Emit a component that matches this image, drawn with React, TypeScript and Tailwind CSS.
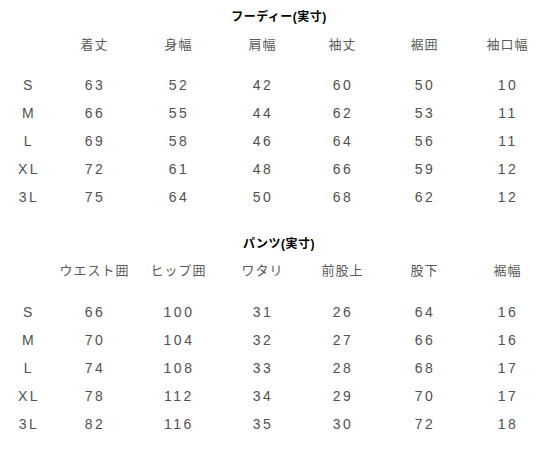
const FONT = "font-['Liberation_Sans','Noto_Sans_CJK_JP',sans-serif]";

type Table = {
  title: string;
  headers: string[];
  rows: [string, ...number[]][];
};

const tables: Table[] = [
  {
    title: "フーディー(実寸)",
    headers: ["着丈", "身幅", "肩幅", "袖丈", "裾囲", "袖口幅"],
    rows: [
      ["S", 63, 52, 42, 60, 50, 10],
      ["M", 66, 55, 44, 62, 53, 11],
      ["L", 69, 58, 46, 64, 56, 11],
      ["XL", 72, 61, 48, 66, 59, 12],
      ["3L", 75, 64, 50, 68, 62, 12],
    ],
  },
  {
    title: "パンツ(実寸)",
    headers: ["ウエスト囲", "ヒップ囲", "ワタリ", "前股上", "股下", "裾幅"],
    rows: [
      ["S", 66, 100, 31, 26, 64, 16],
      ["M", 70, 104, 32, 27, 66, 16],
      ["L", 74, 108, 33, 28, 68, 17],
      ["XL", 78, 112, 34, 29, 70, 17],
      ["3L", 82, 116, 35, 30, 72, 18],
    ],
  },
];

const GRID = "grid grid-cols-[56px_76px_92px_76px_84px_80px_86px]";

function SizeTable({ table, first }: { table: Table; first: boolean }) {
  return (
    <div className={first ? "pt-[7px]" : "mt-[23px]"}>
      <div className="h-5 pl-2 text-center text-[12px] font-bold leading-5 tracking-[0.5px] text-black">
        {table.title}
      </div>
      <div className={`${GRID} ${first ? "mt-2" : "mt-[7px]"} h-5 items-center text-[13px] leading-5 text-[#5a5a5a]`}>
        <div />
        {table.headers.map((h) => (
          <div key={h} className="pl-[1px] text-center tracking-[1px]">
            {h}
          </div>
        ))}
      </div>
      <div className={first ? "mt-4" : "mt-[17px]"}>
        {table.rows.map((row) => (
          <div
            key={row[0]}
            className={`${GRID} h-7 items-center text-[14px] leading-7 text-[#505050]`}
          >
            {row.map((cell, i) => (
              <div key={i} className="pl-[2px] text-center tracking-[2.5px]">
                {cell}
              </div>
            ))}
          </div>
        ))}
      </div>
    </div>
  );
}

export default function App() {
  return (
    <div className={`${FONT} h-[449px] w-[550px] overflow-hidden bg-white`}>
      {tables.map((t, i) => (
        <SizeTable key={t.title} table={t} first={i === 0} />
      ))}
    </div>
  );
}
